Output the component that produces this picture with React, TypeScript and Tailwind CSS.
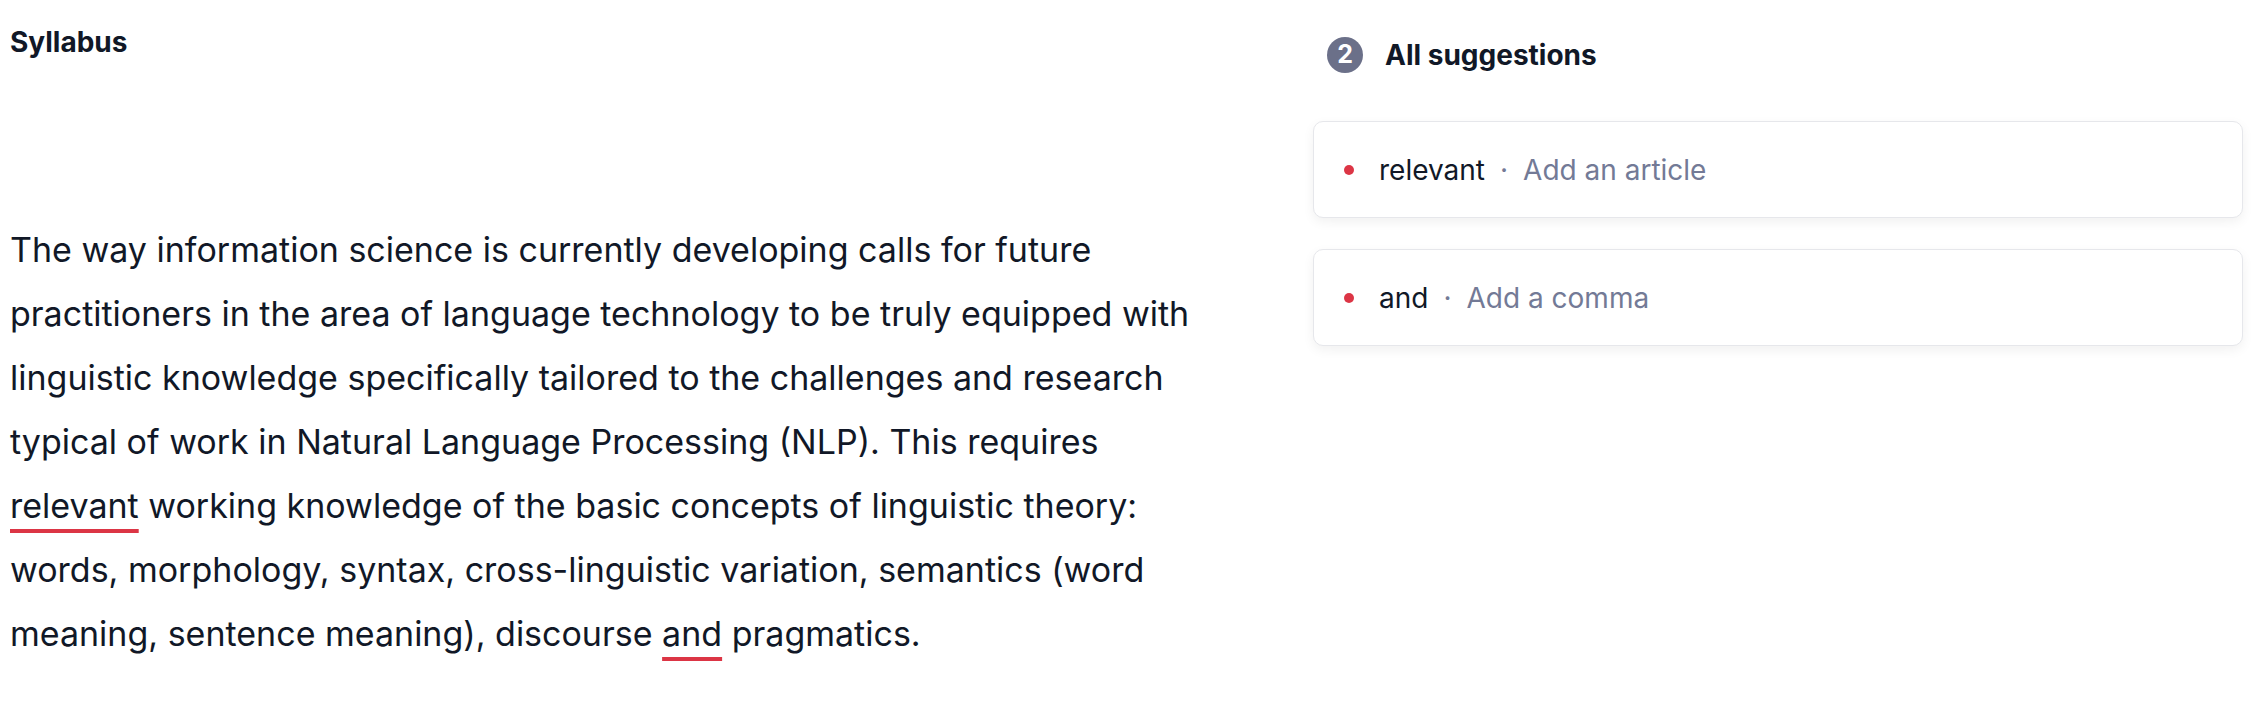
import React from "react";

const Suggestion = ({ word, hint }: { word: string; hint: string }) => (
  <div className="flex h-[97px] items-center rounded-[10px] border border-[#e6e7eb] bg-white pl-[30px] shadow-[0_4px_12px_rgba(0,0,0,0.06)]">
    <span className="h-[10px] w-[10px] rounded-full bg-[#dc3545]" />
    <span className="ml-[25px] text-[28px] text-[#111827]">{word}</span>
    <span className="mx-[15px] text-[28px] text-[#737a96]">·</span>
    <span className="text-[28px] text-[#737a96]">{hint}</span>
  </div>
);

export default function App() {
  return (
    <div className="flex min-h-[712px] w-full bg-white font-['Inter',sans-serif] text-[#111827]">
      <div className="w-[1313px] shrink-0 pl-[10px] pt-[18px]">
        <h1 className="text-[28px] font-bold leading-[48px] text-[#111827]">Syllabus</h1>
        <p className="mt-[152px] w-[1205px] text-[34px] leading-[64px] text-[#111827]">
          The way information science is currently developing calls for future practitioners in the area of language
          technology to be truly equipped with linguistic knowledge specifically tailored to the challenges and research
          typical of work in Natural Language Processing (NLP). This requires{" "}
          <span className="underline decoration-[#dc3545] decoration-[4px] underline-offset-[11px]">relevant</span>{" "}
          working knowledge of the basic concepts of linguistic theory: words, morphology, syntax, cross-linguistic
          variation, semantics (word meaning, sentence meaning), discourse{" "}
          <span className="underline decoration-[#dc3545] decoration-[4px] underline-offset-[11px]">and</span>{" "}
          pragmatics.
        </p>
      </div>
      <div className="flex-1 pr-[21px] pt-[38px]">
        <div className="flex h-[34px] items-center pl-[14px]">
          <span className="flex h-[36px] w-[36px] items-center justify-center rounded-full bg-[#6b7089] text-[25px] font-bold text-white">
            2
          </span>
          <span className="ml-[22px] text-[28px] font-bold text-[#111827]">All suggestions</span>
        </div>
        <div className="mt-[49px] flex flex-col gap-[31px]">
          <Suggestion word="relevant" hint="Add an article" />
          <Suggestion word="and" hint="Add a comma" />
        </div>
      </div>
    </div>
  );
}
